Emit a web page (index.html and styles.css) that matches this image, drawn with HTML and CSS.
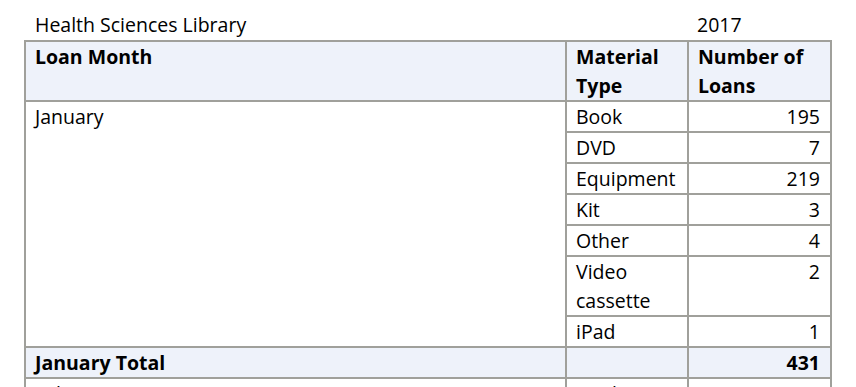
FILE: index.html
```html
<!DOCTYPE html>
<html>
<head>
<meta charset="utf-8">
<link rel="stylesheet" href="styles.css">
</head>
<body>
<div class="report">
  <div class="title-row">
    <div class="t1">Health Sciences Library</div>
    <div class="t2"></div>
    <div class="t3">2017</div>
  </div>
  <table class="loans">
    <colgroup>
      <col class="c1"><col class="c2"><col class="c3">
    </colgroup>
    <thead>
      <tr class="head">
        <th>Loan Month</th>
        <th>Material Type</th>
        <th>Number of Loans</th>
      </tr>
    </thead>
    <tbody>
      <tr><td rowspan="7">January</td><td>Book</td><td class="num">195</td></tr>
      <tr><td>DVD</td><td class="num">7</td></tr>
      <tr><td>Equipment</td><td class="num">219</td></tr>
      <tr><td>Kit</td><td class="num">3</td></tr>
      <tr><td>Other</td><td class="num">4</td></tr>
      <tr><td>Video cassette</td><td class="num">2</td></tr>
      <tr><td>iPad</td><td class="num">1</td></tr>
      <tr class="total"><td>January Total</td><td></td><td class="num">431</td></tr>
      <tr><td>February</td><td>Book</td><td class="num">175</td></tr>
    </tbody>
  </table>
</div>
</body>
</html>
```
FILE: styles.css
```css
html, body {
  margin: 0;
  padding: 0;
  background: #ffffff;
}
body {
  font-family: "Open Sans", "Noto Sans", sans-serif;
  font-size: 19.5px;
  color: #000;
}
.report {
  margin-left: 24px;
  padding-top: 10px;
  width: 808px;
}
.title-row {
  display: grid;
  grid-template-columns: 541px 122px 145px;
  line-height: 29px;
  height: 30px;
}
.title-row > div {
  padding-left: 11px;
}
.title-row .t3 {
  padding-left: 10px;
}
.loans {
  border-collapse: separate;
  border-spacing: 0;
  table-layout: fixed;
  width: 808px;
  border-left: 2px solid #a0a09b;
  border-top: 2px solid #a0a09b;
}
.c1 { width: 541px; }
.c2 { width: 122px; }
.c3 { width: 143px; }
.loans th, .loans td {
  border-right: 2px solid #a0a09b;
  border-bottom: 2px solid #a0a09b;
  padding: 0 10px 0 9px;
  line-height: 29px;
  text-align: left;
  vertical-align: top;
  overflow: hidden;
}
.loans th {
  font-weight: bold;
  background: #eef2fa;
}
.loans td.num {
  text-align: right;
}
.loans tr.total td {
  background: #eef2fa;
  font-weight: bold;
}
```
